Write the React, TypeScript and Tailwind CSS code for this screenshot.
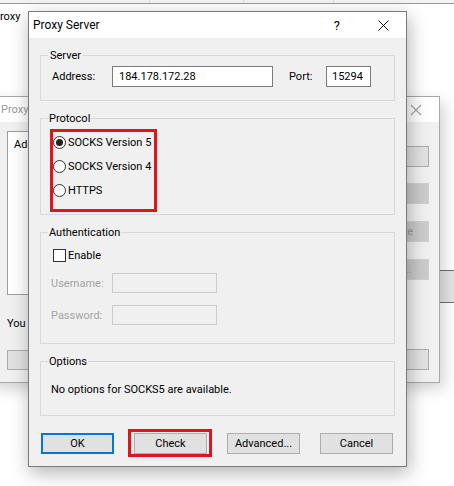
import React from "react";

const font = { fontFamily: 'Roboto, "Noto Sans", sans-serif' };

function Radio({ checked, label }: { checked?: boolean; label: string }) {
  return (
    <div className="flex h-[24px] items-center">
      <span className="ml-[12px] flex h-[13px] w-[13px] items-center justify-center rounded-full border border-[#333] bg-white">
        {checked && <span className="h-[7px] w-[7px] rounded-full bg-[#222]" />}
      </span>
      <span className="ml-[2px] text-[11px] leading-[15px] text-black">{label}</span>
    </div>
  );
}

function Btn({ children, cls = "" }: { children: React.ReactNode; cls?: string }) {
  return (
    <div
      className={`flex h-[21px] w-[73px] items-center justify-center border bg-[#e1e1e1] text-[11px] leading-[15px] text-black ${cls}`}
    >
      {children}
    </div>
  );
}

export default function App() {
  return (
    <div className="relative h-[486px] w-[454px] overflow-hidden bg-white text-[11px]" style={font}>
      {/* top window header strip */}
      <div className="absolute left-0 top-0 flex h-[4px] w-[454px] border-b border-[#9a9a9a] bg-[#f3f3f3]">
        <div className="w-[150px] border-r border-[#dddddd]" />
        <div className="w-[94px] border-r border-[#dddddd]" />
        <div className="w-[90px] border-r border-[#dddddd]" />
      </div>
      <div className="absolute left-0 top-[9px] text-[11px] leading-[15px] text-black">roxy</div>

      {/* third window fragment at right */}
      <div className="absolute left-[440px] top-[270px] h-[33px] w-[20px] border-y border-[#6f6f6f] bg-[#e4e4e4]" />

      {/* background window 2 */}
      <div className="absolute left-[-10px] top-[96px] flex h-[287px] w-[450px] flex-col border border-[#a8a8a8] bg-[#f0f0f0] shadow-[4px_6px_14px_rgba(0,0,0,0.18)]">
        <div className="flex h-[25px] items-center justify-between bg-white pl-[10px] pr-[17px]">
          <span className="text-[11px] leading-[15px] text-[#9a9a9a]">Proxy</span>
          <svg width="12" height="12" viewBox="0 0 12 12">
            <path d="M1 1L11 11M11 1L1 11" stroke="#a0a0a0" strokeWidth="1.1" />
          </svg>
        </div>
        <div className="relative flex-1">
          <div className="absolute left-[16px] top-[9px] h-[164px] w-[60px] border border-[#9c9c9c] bg-white pl-[6px] pt-[5px] text-[11px] leading-[15px] text-black">
            Add
          </div>
          <div className="absolute left-[16px] top-[194px] text-[11px] leading-[15px] text-black">You can</div>
          <div className="absolute left-[16px] top-[228px] h-[20px] w-[60px] border border-[#adadad] bg-[#e1e1e1]" />
          <div className="absolute left-[350px] top-[24px] h-[21px] w-[88px] border border-[#adadad] bg-[#e1e1e1]" />
          <div className="absolute left-[350px] top-[61px] h-[21px] w-[88px] border border-[#d0d0d0] bg-[#cbcbcb]" />
          <div className="absolute left-[350px] top-[99px] flex h-[21px] w-[88px] items-center justify-end border border-[#d0d0d0] bg-[#cbcbcb] pr-[15px] text-[11px] leading-[15px] text-[#9a9a9a]">
            Remove
          </div>
          <div className="absolute left-[350px] top-[137px] flex h-[21px] w-[88px] items-center justify-end border border-[#d0d0d0] bg-[#cbcbcb] pr-[16px] text-[11px] leading-[15px] text-[#a5a5a5]">
            Edit...
          </div>
          <div className="absolute left-[350px] top-[227px] h-[21px] w-[88px] border border-[#adadad] bg-[#e1e1e1]" />
        </div>
      </div>

      {/* main dialog */}
      <div className="absolute left-[28px] top-[11px] flex h-[456px] w-[379px] flex-col border border-[#7a7a7a] bg-[#f0f0f0] shadow-[2px_6px_18px_rgba(0,0,0,0.3)]">
        {/* title bar */}
        <div className="flex h-[26px] items-center bg-white pl-[4px]">
          <span className="text-[12px] leading-[15px] text-black">Proxy Server</span>
          <span className="ml-auto text-[13px] leading-[15px] text-black">?</span>
          <svg className="ml-[38px] mr-[17px]" width="11" height="11" viewBox="0 0 11 11">
            <path d="M0.5 0.5L10.5 10.5M10.5 0.5L0.5 10.5" stroke="#111" strokeWidth="1" />
          </svg>
        </div>

        <div className="flex flex-1 flex-col px-[11px]">
          {/* Server */}
          <fieldset className="mt-[10px] border border-[#d9d9d9] pb-[13px] pl-[11px] pr-[10px]">
            <legend className="ml-[-4px] px-[2px] text-[11px] leading-[15px] text-black">Server</legend>
            <div className="mt-[3px] flex h-[21px] items-center">
              <span className="w-[60px] text-[11px] leading-[15px] text-black">Address:</span>
              <div className="flex h-[21px] w-[161px] items-center border border-[#7a7a7a] bg-white pl-[6px] text-[11px] leading-[15px] text-black">
                184.178.172.28
              </div>
              <span className="ml-[16px] w-[37px] text-[11px] leading-[15px] text-black">Port:</span>
              <div className="flex h-[21px] w-[45px] items-center border border-[#7a7a7a] bg-white pl-[5px] text-[11px] leading-[15px] text-black">
                15294
              </div>
            </div>
          </fieldset>

          {/* Protocol */}
          <fieldset className="mt-[10px] border border-[#d9d9d9] pb-[12px]">
            <legend className="ml-[7px] px-[1px] text-[11px] leading-[15px] text-black">Protocol</legend>
            <div className="mt-[4px] flex flex-col">
              <Radio checked label="SOCKS Version 5" />
              <Radio label="SOCKS Version 4" />
              <Radio label="HTTPS" />
            </div>
          </fieldset>

          {/* Authentication */}
          <fieldset className="mt-[10px] border border-[#d9d9d9] pb-[18px]">
            <legend className="ml-[7px] px-[1px] text-[11px] leading-[15px] text-black">Authentication</legend>
            <div className="mt-[6px] flex h-[18px] items-center">
              <span className="ml-[12px] h-[13px] w-[13px] border border-[#333] bg-white" />
              <span className="ml-[2px] text-[11px] leading-[15px] text-black">Enable</span>
            </div>
            <div className="mt-[9px] flex h-[20px] items-center">
              <span className="ml-[10px] w-[61px] text-[11px] leading-[15px] text-[#a3a3a3]">Username:</span>
              <div className="h-[20px] w-[105px] border border-[#cccccc] bg-[#f0f0f0]" />
            </div>
            <div className="mt-[12px] flex h-[20px] items-center">
              <span className="ml-[10px] w-[61px] text-[11px] leading-[15px] text-[#a3a3a3]">Password:</span>
              <div className="h-[20px] w-[105px] border border-[#cccccc] bg-[#f0f0f0]" />
            </div>
          </fieldset>

          {/* Options */}
          <fieldset className="mt-[10px] border border-[#d9d9d9] pb-[18px]">
            <legend className="ml-[7px] px-[1px] text-[11px] leading-[15px] text-black">Options</legend>
            <div className="ml-[10px] mt-[13px] text-[11px] leading-[15px] text-black">
              No options for SOCKS5 are available.
            </div>
          </fieldset>

          {/* Buttons */}
          <div className="mt-[17px] flex justify-between pl-[1px] pr-[2px]">
            <Btn cls="border-[#0078d7] border-2">OK</Btn>
            <Btn cls="border-[#adadad]">Check</Btn>
            <Btn cls="border-[#adadad]">Advanced...</Btn>
            <Btn cls="border-[#adadad]">Cancel</Btn>
          </div>
        </div>

        {/* red annotation boxes */}
        <div className="absolute left-[21px] top-[117px] h-[83px] w-[107px] border-[3px] border-[#e1141c]" />
        <div className="absolute left-[99px] top-[417px] h-[28px] w-[84px] border-[3px] border-[#e1141c]" />
      </div>
    </div>
  );
}
